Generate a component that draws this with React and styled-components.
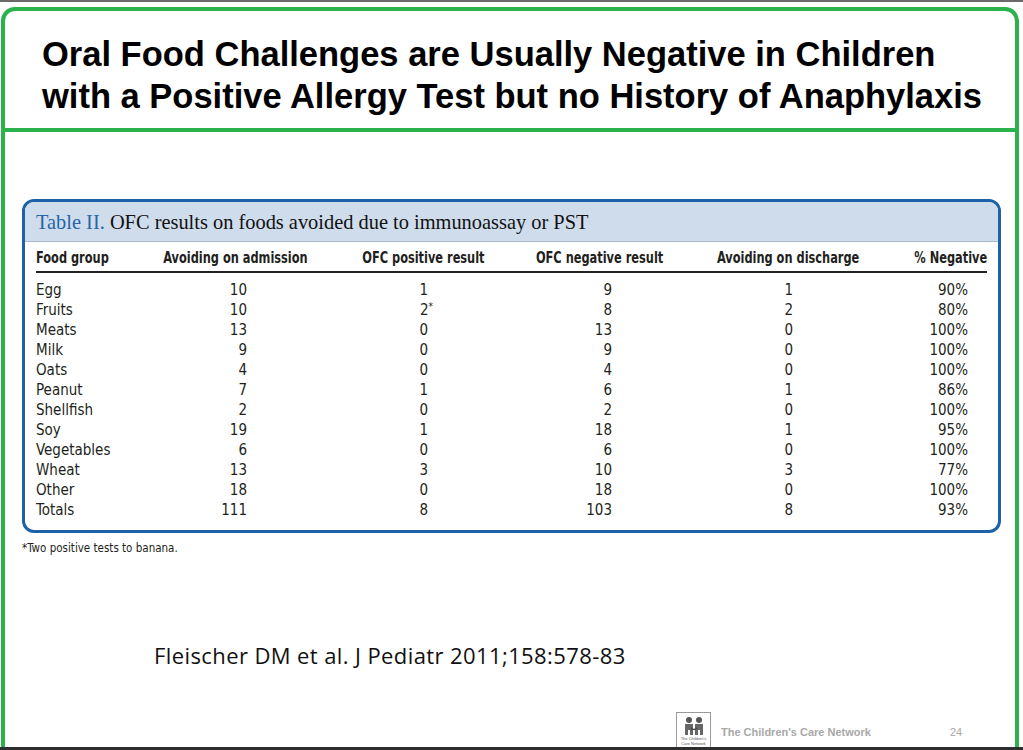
import React from 'react';
import styled, { createGlobalStyle } from 'styled-components';

const GlobalStyle = createGlobalStyle`
  html, body {
    margin: 0;
    padding: 0;
    background: #ffffff;
  }
  body {
    overflow: hidden;
  }
`;

const rows = [
  ['Egg', '10', '1', '9', '1', '90%'],
  ['Fruits', '10', '2*', '8', '2', '80%'],
  ['Meats', '13', '0', '13', '0', '100%'],
  ['Milk', '9', '0', '9', '0', '100%'],
  ['Oats', '4', '0', '4', '0', '100%'],
  ['Peanut', '7', '1', '6', '1', '86%'],
  ['Shellfish', '2', '0', '2', '0', '100%'],
  ['Soy', '19', '1', '18', '1', '95%'],
  ['Vegetables', '6', '0', '6', '0', '100%'],
  ['Wheat', '13', '3', '10', '3', '77%'],
  ['Other', '18', '0', '18', '0', '100%'],
  ['Totals', '111', '8', '103', '8', '93%'],
];

// right padding of the number in each column, so digits line up like the journal table
const numPad = [0, 83, 88, 72, 99, 19];

const headers = [
  'Food group',
  'Avoiding on admission',
  'OFC positive result',
  'OFC negative result',
  'Avoiding on discharge',
  '% Negative',
];

const alignOf = (i) => (i === 0 ? 'left' : i === 5 ? 'right' : 'center');

const App = () => (
  <>
    <GlobalStyle />
    <Page>
      <Frame>
        <TitleBox>
          <Title>
            Oral Food Challenges are Usually Negative in Children
            <br />
            with a Positive Allergy Test but no History of Anaphylaxis
          </Title>
        </TitleBox>

        <Body>
          <TableBox>
            <Caption>
              <CaptionLabel>Table II.</CaptionLabel> OFC results on foods avoided due to immunoassay or PST
            </Caption>
            <Grid>
              {headers.map((h, i) => (
                <HeadCell key={h} $align={alignOf(i)}>
                  <Squeeze $origin={alignOf(i)}>{h}</Squeeze>
                </HeadCell>
              ))}
              <Rule />
              {rows.map((r) =>
                r.map((c, i) => (
                  <Cell key={r[0] + i} $align={i === 0 ? 'left' : 'right'} $pad={numPad[i]}>
                    {c.endsWith('*') ? (
                      <>
                        {c.slice(0, -1)}
                        <Star>*</Star>
                      </>
                    ) : (
                      c
                    )}
                  </Cell>
                ))
              )}
            </Grid>
          </TableBox>
          <Footnote>*Two positive tests to banana.</Footnote>

          <Citation>Fleischer DM et al. J Pediatr 2011;158:578-83</Citation>

          <Footer>
            <Logo>
              <svg width="24" height="20" viewBox="0 0 24 20">
                <circle cx="7" cy="4" r="3" fill="#555" />
                <circle cx="17" cy="4" r="3" fill="#555" />
                <path d="M3 8 h8 v11 h-3 v-5 h-2 v5 h-3 z" fill="#666" />
                <path d="M13 8 h8 v11 h-3 v-5 h-2 v5 h-3 z" fill="#666" />
                <path d="M9 12 q3 3 6 0" stroke="#444" strokeWidth="1.2" fill="none" />
              </svg>
              <LogoText>The Children's</LogoText>
              <LogoText>Care Network</LogoText>
            </Logo>
            <FooterText>The Children's Care Network</FooterText>
            <PageNum>24</PageNum>
          </Footer>
        </Body>
      </Frame>
    </Page>
  </>
);

export default App;

const Page = styled.div`
  width: 1023px;
  height: 750px;
  box-sizing: border-box;
  border-top: 2px solid #6a6a6a;
  border-bottom: 3px solid #2e2e2e;
  display: flex;
  flex-direction: column;
  overflow: hidden;
  background: #fff;
`;

const Frame = styled.div`
  flex: 1;
  margin: 5px 4px -20px 1px;
  border: 4px solid #2bb24c;
  border-bottom: none;
  border-radius: 14px 14px 0 0;
  display: flex;
  flex-direction: column;
`;

const TitleBox = styled.div`
  border-bottom: 4px solid #2bb24c;
  padding: 22px 0 0 37px;
  height: 95px;
`;

const Title = styled.h1`
  margin: 0;
  font-family: 'Liberation Sans', Arial, sans-serif;
  font-weight: bold;
  font-size: 34.5px;
  line-height: 42px;
  color: #000;
  white-space: nowrap;
`;

const Body = styled.div`
  flex: 1;
  display: flex;
  flex-direction: column;
  padding: 67px 0 0 17px;
`;

const TableBox = styled.div`
  width: 973px;
  border: 3px solid #1d62a6;
  border-radius: 12px;
  overflow: hidden;
  padding-bottom: 10px;
`;

const Caption = styled.div`
  background: #cfdcec;
  border-bottom: 1px solid #a8bad0;
  height: 40px;
  box-sizing: border-box;
  padding: 9px 0 0 11px;
  font-family: 'Liberation Serif', 'Times New Roman', serif;
  font-size: 20.4px;
  line-height: 22px;
  color: #111;
  white-space: pre;
`;

const CaptionLabel = styled.span`
  color: #2466a6;
`;

const Grid = styled.div`
  display: grid;
  grid-template-columns: 104px 190px 186px 168px 208px 95px;
  margin: 0 11px;
  font-family: 'DejaVu Sans Condensed', 'Liberation Sans', sans-serif;
  color: #231f20;
`;

const HeadCell = styled.div`
  font-weight: bold;
  font-size: 16px;
  line-height: 20px;
  padding: 6px 0 3px;
  white-space: nowrap;
  text-align: ${(p) => p.$align};
`;

const Squeeze = styled.span`
  display: inline-block;
  transform: scaleX(0.79);
  transform-origin: ${(p) => p.$origin} center;
`;

const Rule = styled.div`
  grid-column: 1 / -1;
  height: 2px;
  background: #222;
  margin-bottom: 7px;
`;

const Cell = styled.div`
  font-size: 15px;
  line-height: 20px;
  text-align: ${(p) => p.$align};
  padding-right: ${(p) => p.$pad}px;
`;

const Star = styled.span`
  font-size: 10px;
  vertical-align: top;
  line-height: 14px;
  margin-right: -5px;
`;

const Footnote = styled.div`
  margin-top: 8px;
  font-family: 'DejaVu Sans Condensed', 'Liberation Sans', sans-serif;
  font-size: 11.5px;
  color: #231f20;
`;

const Citation = styled.div`
  margin: 85px 0 0 132px;
  font-family: 'Open Sans', Lato, sans-serif;
  font-size: 22px;
  letter-spacing: 0.4px;
  color: #111;
`;

const Footer = styled.div`
  display: flex;
  align-items: center;
  margin: 42px 0 0 654px;
`;

const Logo = styled.div`
  width: 35px;
  height: 38px;
  border: 1px solid #999;
  box-sizing: border-box;
  display: flex;
  flex-direction: column;
  align-items: center;
  padding-top: 3px;
  flex-shrink: 0;
`;

const LogoText = styled.div`
  font-family: 'Liberation Sans', Arial, sans-serif;
  font-size: 4px;
  line-height: 5px;
  color: #555;
  white-space: nowrap;
`;

const FooterText = styled.div`
  margin-left: 10px;
  margin-top: 2px;
  font-family: 'Liberation Sans', Arial, sans-serif;
  font-weight: bold;
  font-size: 11px;
  color: #a8a8a8;
`;

const PageNum = styled.div`
  margin-left: 79px;
  margin-top: 2px;
  font-family: 'Liberation Sans', Arial, sans-serif;
  font-size: 11px;
  color: #a8a8a8;
`;
